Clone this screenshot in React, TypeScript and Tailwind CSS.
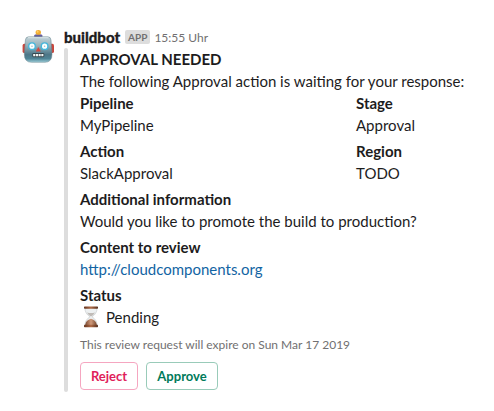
import type { ReactNode } from "react";

function RobotAvatar() {
  return (
    <svg viewBox="0 0 36 36" className="h-9 w-9" aria-label="buildbot">
      <defs>
        <linearGradient id="face" x1="0" y1="0" x2="0" y2="1">
          <stop offset="0" stopColor="#c3d3d8" />
          <stop offset="0.35" stopColor="#94b0ba" />
          <stop offset="0.7" stopColor="#4d7687" />
          <stop offset="0.86" stopColor="#4f8496" />
          <stop offset="1" stopColor="#9fd0da" />
        </linearGradient>
      </defs>
      <rect x="2.6" y="14.8" width="4" height="9.2" rx="1.6" fill="#c9473d" />
      <rect x="30" y="14.8" width="4" height="9.2" rx="1.6" fill="#c9473d" />
      <path d="M14.2 8.5V6.6Q14.2 5 18.3 5T22.4 6.6V8.5Z" fill="#675f9c" />
      <ellipse cx="18.3" cy="3.4" rx="2.7" ry="2.4" fill="#f2ad32" />
      <circle cx="17.6" cy="2.7" r="1" fill="#ffd064" />
      <path d="M8.5 7.8H28Q30.6 7.8 31 11L32 25Q32 33.3 25 33.3H11.5Q4.3 33.3 4.3 25L5.4 11Q5.8 7.8 8.5 7.8Z" fill="url(#face)" stroke="#64808b" strokeWidth=".5" />
      <path d="M8 8.7H28.5" stroke="#d9e4e7" strokeWidth="1" />
      <circle cx="12" cy="17.2" r="3.3" fill="#fbffff" stroke="#45b7dc" strokeWidth="1.4" />
      <circle cx="24.6" cy="17.2" r="3.3" fill="#fbffff" stroke="#45b7dc" strokeWidth="1.4" />
      <circle cx="12" cy="17.2" r=".8" fill="#a9bdc2" />
      <circle cx="24.6" cy="17.2" r=".8" fill="#a9bdc2" />
      <path d="M18.3 18L20.8 22.4H15.8Z" fill="#d8463f" />
      <rect x="12.3" y="24" width="12" height="4.2" rx="1.1" fill="#38474e" />
      <path d="M13.2 26.1H23.6" stroke="#f4f8f8" strokeWidth="2.2" strokeDasharray="2.1 .6" />
    </svg>
  );
}

function Hourglass() {
  return (
    <svg viewBox="0 0 22 22" className="h-[22px] w-[22px]" aria-hidden="true">
      <defs>
        <linearGradient id="wood">
          <stop offset="0" stopColor="#64351f" />
          <stop offset="0.5" stopColor="#b06a45" />
          <stop offset="1" stopColor="#54301f" />
        </linearGradient>
        <linearGradient id="sand">
          <stop offset="0" stopColor="#7d4b32" />
          <stop offset="0.5" stopColor="#cf997a" />
          <stop offset="1" stopColor="#784930" />
        </linearGradient>
      </defs>
      <path d="M5 2Q4.8 7.5 10 10.8Q4.8 14 5 19.5H17Q17.2 14 12 10.8Q17.2 7.5 17 2Z" fill="#edf0f1" stroke="#c3c8ca" strokeWidth=".6" />
      <path d="M7 6.4Q11 7.4 15 6.4Q13.8 8.7 11 10.5Q8.2 8.7 7 6.4Z" fill="#c0bbb7" />
      <path d="M11 12.8Q16.2 14.2 16.8 19H5.2Q5.8 14.2 11 12.8Z" fill="url(#sand)" />
      <rect x="4" y=".4" width="14" height="2.4" rx=".7" fill="url(#wood)" />
      <rect x="4" y="18.7" width="14" height="2.5" rx=".7" fill="url(#wood)" />
    </svg>
  );
}

function Field({ label, children }: { label: string; children: ReactNode }) {
  return (
    <div>
      <div className="font-bold">{label}</div>
      <div>{children}</div>
    </div>
  );
}

export default function App() {
  return (
    <main className="flex h-[411px] w-[494px] overflow-hidden bg-white pt-[27px] pl-5 font-[Lato,Carlito,sans-serif] text-[15px] leading-[22px] text-[#1d1c1d]">
      <div className="w-11 shrink-0 pt-[2px]">
        <RobotAvatar />
      </div>
      <div className="min-w-0 flex-1">
        <header className="flex h-[21px] items-center">
          <span className="-mt-0.5 font-black [-webkit-text-stroke:0.3px_#1d1c1d]">buildbot</span>
          <span className="ml-[5px] -mt-px flex h-[14px] items-center rounded-[2px] bg-[#dddddd] px-[3px] text-[10px] leading-none font-bold text-[#717071]">APP</span>
          <time className="ml-1 pt-px text-[12px] text-[#717071]">15:55 Uhr</time>
        </header>
        <div className="flex h-[344px]">
          <div className="w-1 shrink-0 rounded-full bg-[#dddddd]" />
          <div className="ml-3 flex-1">
            <div className="font-bold">APPROVAL NEEDED</div>
            <div className="whitespace-nowrap">The following Approval action is waiting for your response:</div>
            <div className="grid grid-cols-[276px_1fr] gap-y-1">
              <Field label="Pipeline">MyPipeline</Field>
              <Field label="Stage">Approval</Field>
              <Field label="Action">SlackApproval</Field>
              <Field label="Region">TODO</Field>
            </div>
            <div className="mt-1 flex flex-col gap-1">
              <Field label="Additional information">Would you like to promote the build to production?</Field>
              <Field label="Content to review">
                <a href="#" className="text-[#1264a3]">http://cloudcomponents.org</a>
              </Field>
              <Field label="Status">
                <span className="flex h-[22px] items-center gap-1"><Hourglass />Pending</span>
              </Field>
            </div>
            <div className="mt-2 text-[12px] leading-[18px] text-[#717071]">This review request will expire on Sun Mar 17 2019</div>
            <div className="mt-2 flex gap-2">
              <button className="h-7 w-[58px] rounded-[4px] border border-[#f5a6c0] text-[13px] font-bold text-[#e01e5a]">Reject</button>
              <button className="h-7 w-[72px] rounded-[4px] border border-[#99cbb9] text-[13px] font-bold text-[#007a5a]">Approve</button>
            </div>
          </div>
        </div>
      </div>
    </main>
  );
}
